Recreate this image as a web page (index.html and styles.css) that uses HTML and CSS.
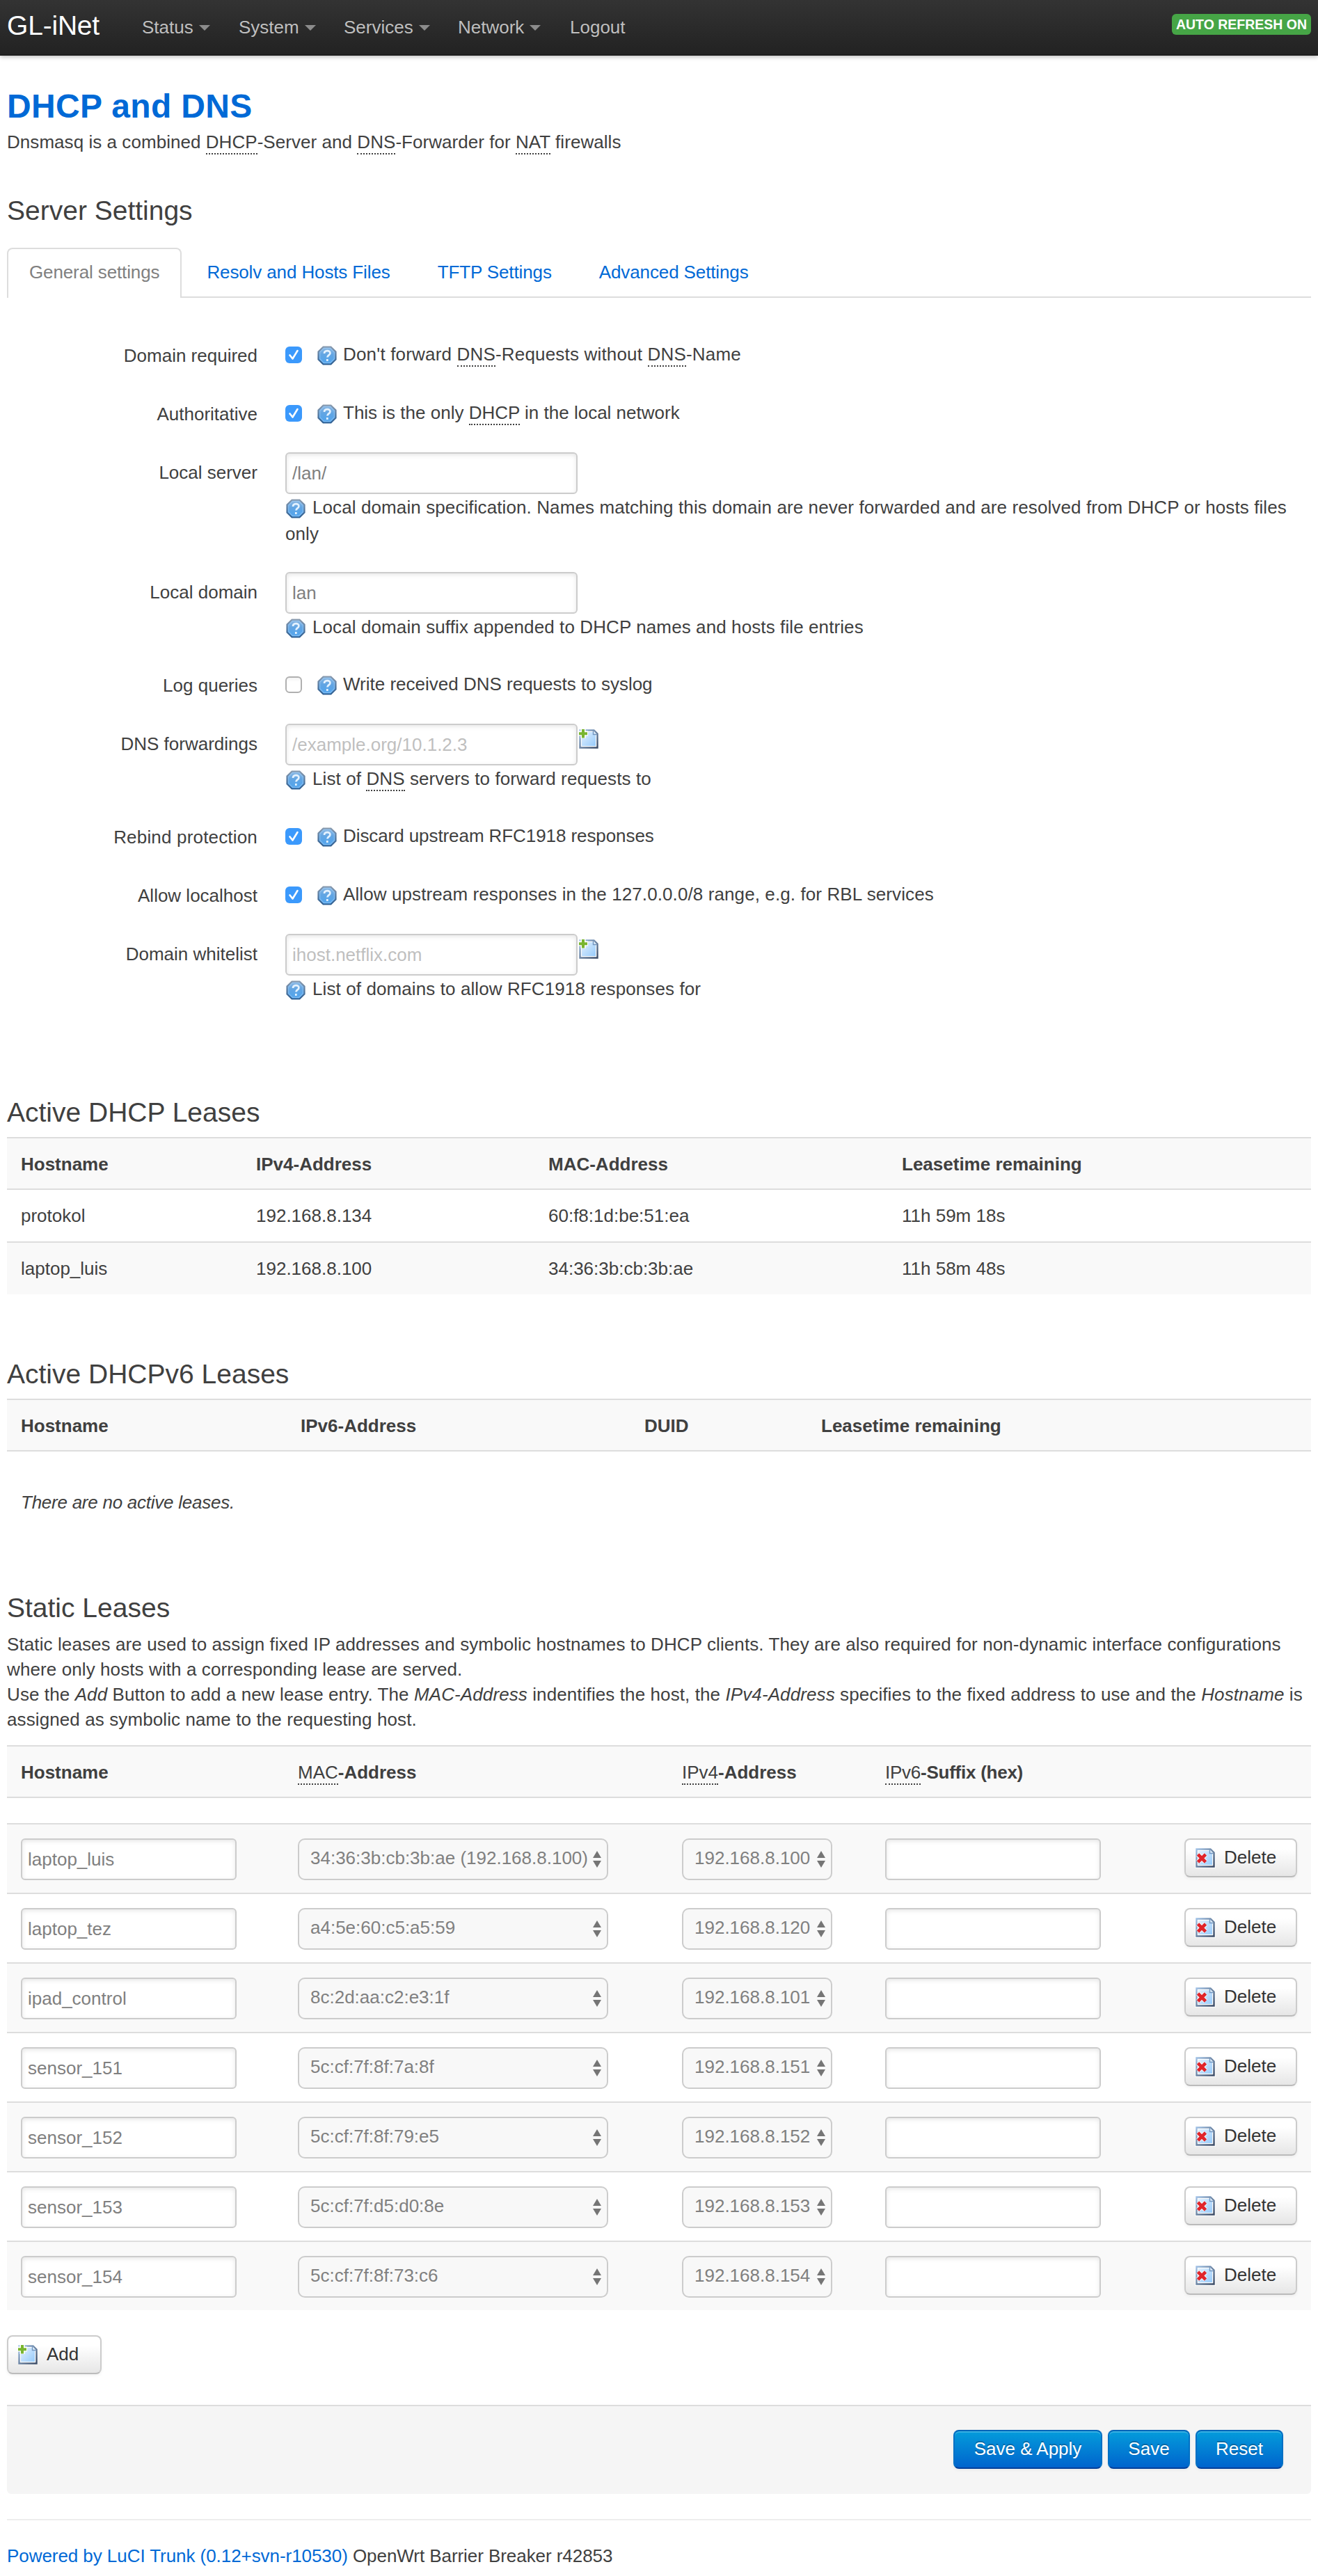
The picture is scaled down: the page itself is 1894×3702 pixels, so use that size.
FILE: index.html
```html
<!DOCTYPE html>
<html lang="en">
<head>
<meta charset="utf-8">
<title>GL-iNet - DHCP and DNS</title>
<link rel="stylesheet" href="styles.css">
</head>
<body>
<svg class="defs" width="0" height="0" aria-hidden="true">
  <defs>
    <linearGradient id="helpFill" x1="0" y1="0" x2="0" y2="1"><stop offset="0" stop-color="#8fb9e2"/><stop offset=".45" stop-color="#62a5e3"/><stop offset="1" stop-color="#4fa4ee"/></linearGradient>
    <linearGradient id="helpEdge" x1="0" y1="0" x2="0" y2="1"><stop offset="0" stop-color="#8799ae"/><stop offset="1" stop-color="#2f5f92"/></linearGradient>
    <linearGradient id="pageFill" x1="0" y1="0" x2="1" y2="1"><stop offset="0" stop-color="#e3f0fd"/><stop offset="1" stop-color="#97cbfb"/></linearGradient>
    <linearGradient id="pageEdge" x1="0" y1="0" x2="1" y2="1"><stop offset="0" stop-color="#9fc0e4"/><stop offset="1" stop-color="#3c4c66"/></linearGradient>
    <symbol id="help" viewBox="0 0 28 28">
      <path d="M8.500 1.500h11l7 7v11l-7 7h-11l-7-7v-11z" fill="url(#helpFill)" stroke="url(#helpEdge)" stroke-width="2.200"/>
      <path d="M9.300 3.700h9.400l5.600 5.600v9.400l-5.600 5.600H9.300l-5.600-5.600V9.300z" fill="none" stroke="#a9d3fa" stroke-opacity=".5" stroke-width="1.200"/>
      <path d="M10 11c0-5 8.400-5 8.400-.6 0 3-4 3-4 6.200M14.300 19v3" fill="none" stroke="#e4f2ff" stroke-width="2.700"/>
    </symbol>
    <symbol id="page" viewBox="0 0 32 32">
      <path d="M3.500 3.500H23.500L28.500 8.500V28.500H3.500Z" fill="#fff" stroke="url(#pageEdge)" stroke-width="2.400"/>
      <path d="M6 6H22L23.500 9.500H26V26H6Z" fill="url(#pageFill)"/>
      <path d="M22.500 4v5.500h5.500" fill="#dcecfb" stroke="#7396bf" stroke-width="1.400"/>
    </symbol>
    <symbol id="add" viewBox="0 0 32 32">
      <use href="#page"/>
      <path d="M8 1v14M1 8h14" stroke="#fff" stroke-width="7"/>
      <path d="M8 2v12.500M2 8.200h12" stroke="#79b530" stroke-width="4"/>
    </symbol>
    <symbol id="del" viewBox="0 0 32 32">
      <path d="M1 1H24L31 8V31H1Z" fill="#fff" fill-opacity=".7"/>
      <use href="#page"/>
      <path d="M5.500 11l11 11m0-11l-11 11" stroke="#fff" stroke-opacity=".7" stroke-width="7"/>
      <path d="M5.500 11l11 11m0-11l-11 11" stroke="#e0252b" stroke-width="4.600"/>
    </symbol>
  </defs>
</svg>
<header class="topbar">
  <a class="brand">GL-iNet</a>
  <nav class="menu">
    <a class="menu-item status">Status<i class="caret"></i></a>
    <a class="menu-item system">System<i class="caret"></i></a>
    <a class="menu-item services">Services<i class="caret"></i></a>
    <a class="menu-item network">Network<i class="caret"></i></a>
    <a class="menu-item">Logout</a>
  </nav>
  <span class="badge">AUTO REFRESH ON</span>
</header>
<main class="container">
  <h1 class="page-title">DHCP and DNS</h1>
  <p class="desc">Dnsmasq is a combined <abbr>DHCP</abbr>-Server and <abbr>DNS</abbr>-Forwarder for <abbr>NAT</abbr> firewalls</p>

  <h2 class="heading server-heading">Server Settings</h2>
  <nav class="tabs">
    <a class="tab active">General settings</a>
    <a class="tab">Resolv and Hosts Files</a>
    <a class="tab">TFTP Settings</a>
    <a class="tab">Advanced Settings</a>
  </nav>

  <form class="settings">
    <div class="row">
      <label class="label">Domain required</label>
      <div class="field check-line"><span class="check on"><svg viewBox="0 0 24 24"><path d="M6.500 12.500l4 5L17.500 6"/></svg></span><svg class="help"><use href="#help"/></svg><span class="loose">Don't forward <abbr>DNS</abbr>-Requests without <abbr>DNS</abbr>-Name</span></div>
    </div>
    <div class="row">
      <label class="label">Authoritative</label>
      <div class="field check-line"><span class="check on"><svg viewBox="0 0 24 24"><path d="M6.500 12.500l4 5L17.500 6"/></svg></span><svg class="help"><use href="#help"/></svg><span>This is the only <abbr>DHCP</abbr> in the local network</span></div>
    </div>
    <div class="row">
      <label class="label">Local server</label>
      <div class="field"><input class="text" type="text" value="/lan/"><p class="hint"><svg class="help"><use href="#help"/></svg>Local domain specification. Names matching this domain are never forwarded and are resolved from DHCP or hosts files<br>only</p></div>
    </div>
    <div class="row">
      <label class="label">Local domain</label>
      <div class="field"><input class="text" type="text" value="lan"><p class="hint"><svg class="help"><use href="#help"/></svg>Local domain suffix appended to DHCP names and hosts file entries</p></div>
    </div>
    <div class="row">
      <label class="label">Log queries</label>
      <div class="field check-line"><span class="check"></span><svg class="help"><use href="#help"/></svg><span>Write received DNS requests to syslog</span></div>
    </div>
    <div class="row">
      <label class="label">DNS forwardings</label>
      <div class="field"><div class="with-add"><input class="text" type="text" placeholder="/example.org/10.1.2.3"><svg class="page-icon"><use href="#add"/></svg></div><p class="hint"><svg class="help"><use href="#help"/></svg>List of <abbr>DNS</abbr> servers to forward requests to</p></div>
    </div>
    <div class="row">
      <label class="label loose">Rebind protection</label>
      <div class="field check-line"><span class="check on"><svg viewBox="0 0 24 24"><path d="M6.500 12.500l4 5L17.500 6"/></svg></span><svg class="help"><use href="#help"/></svg><span class="tight">Discard upstream RFC1918 responses</span></div>
    </div>
    <div class="row">
      <label class="label">Allow localhost</label>
      <div class="field check-line"><span class="check on"><svg viewBox="0 0 24 24"><path d="M6.500 12.500l4 5L17.500 6"/></svg></span><svg class="help"><use href="#help"/></svg><span class="prose">Allow upstream responses in the 127.0.0.0/8 range, e.g. for RBL services</span></div>
    </div>
    <div class="row">
      <label class="label">Domain whitelist</label>
      <div class="field"><div class="with-add"><input class="text" type="text" placeholder="ihost.netflix.com"><svg class="page-icon"><use href="#add"/></svg></div><p class="hint"><svg class="help"><use href="#help"/></svg>List of domains to allow RFC1918 responses for</p></div>
    </div>
  </form>

  <section class="leases">
    <h2 class="heading">Active DHCP Leases</h2>
    <table class="table leases4">
      <colgroup><col class="c1"><col class="c2"><col class="c3"><col></colgroup>
      <tr class="head"><th>Hostname</th><th>IPv4-Address</th><th>MAC-Address</th><th>Leasetime remaining</th></tr>
      <tr><td>protokol</td><td>192.168.8.134</td><td>60:f8:1d:be:51:ea</td><td>11h 59m 18s</td></tr>
      <tr><td>laptop_luis</td><td>192.168.8.100</td><td>34:36:3b:cb:3b:ae</td><td>11h 58m 48s</td></tr>
    </table>
  </section>

  <section class="leases-v6">
    <h2 class="heading">Active DHCPv6 Leases</h2>
    <table class="table leases6">
      <colgroup><col class="c1"><col class="c2"><col class="c3"><col></colgroup>
      <tr class="head"><th>Hostname</th><th>IPv6-Address</th><th>DUID</th><th>Leasetime remaining</th></tr>
      <tr class="empty"><td colspan="4"><em>There are no active leases.</em></td></tr>
    </table>
  </section>

  <section class="static">
    <h2 class="heading">Static Leases</h2>
    <p class="intro">Static leases are used to assign fixed IP addresses and symbolic hostnames to DHCP clients. They are also required for non-dynamic interface configurations<br>where only hosts with a corresponding lease are served.<br>Use the <em>Add</em> Button to add a new lease entry. The <em>MAC-Address</em> indentifies the host, the <em>IPv4-Address</em> specifies to the fixed address to use and the <em>Hostname</em> is<br>assigned as symbolic name to the requesting host.</p>
    <table class="table statics">
      <colgroup><col class="c1"><col class="c2"><col class="c3"><col class="c4"><col></colgroup>
      <tr class="head"><th>Hostname</th><th><abbr>MAC</abbr>-Address</th><th><abbr>IPv4</abbr>-Address</th><th class="suffix"><abbr>IPv6</abbr>-Suffix (hex)</th><th></th></tr>
      <tr class="spacer"><td colspan="5"></td></tr>
      <tr><td><input class="text" value="laptop_luis"></td><td><span class="select mac">34:36:3b:cb:3b:ae (192.168.8.100)<i class="arrows"></i></span></td><td><span class="select ip">192.168.8.100<i class="arrows"></i></span></td><td><input class="text"></td><td><a class="btn"><svg class="page-icon"><use href="#del"/></svg>Delete</a></td></tr>
      <tr><td><input class="text" value="laptop_tez"></td><td><span class="select mac">a4:5e:60:c5:a5:59<i class="arrows"></i></span></td><td><span class="select ip">192.168.8.120<i class="arrows"></i></span></td><td><input class="text"></td><td><a class="btn"><svg class="page-icon"><use href="#del"/></svg>Delete</a></td></tr>
      <tr><td><input class="text" value="ipad_control"></td><td><span class="select mac">8c:2d:aa:c2:e3:1f<i class="arrows"></i></span></td><td><span class="select ip">192.168.8.101<i class="arrows"></i></span></td><td><input class="text"></td><td><a class="btn"><svg class="page-icon"><use href="#del"/></svg>Delete</a></td></tr>
      <tr><td><input class="text" value="sensor_151"></td><td><span class="select mac">5c:cf:7f:8f:7a:8f<i class="arrows"></i></span></td><td><span class="select ip">192.168.8.151<i class="arrows"></i></span></td><td><input class="text"></td><td><a class="btn"><svg class="page-icon"><use href="#del"/></svg>Delete</a></td></tr>
      <tr><td><input class="text" value="sensor_152"></td><td><span class="select mac">5c:cf:7f:8f:79:e5<i class="arrows"></i></span></td><td><span class="select ip">192.168.8.152<i class="arrows"></i></span></td><td><input class="text"></td><td><a class="btn"><svg class="page-icon"><use href="#del"/></svg>Delete</a></td></tr>
      <tr><td><input class="text" value="sensor_153"></td><td><span class="select mac">5c:cf:7f:d5:d0:8e<i class="arrows"></i></span></td><td><span class="select ip">192.168.8.153<i class="arrows"></i></span></td><td><input class="text"></td><td><a class="btn"><svg class="page-icon"><use href="#del"/></svg>Delete</a></td></tr>
      <tr><td><input class="text" value="sensor_154"></td><td><span class="select mac">5c:cf:7f:8f:73:c6<i class="arrows"></i></span></td><td><span class="select ip">192.168.8.154<i class="arrows"></i></span></td><td><input class="text"></td><td><a class="btn"><svg class="page-icon"><use href="#del"/></svg>Delete</a></td></tr>
    </table>
    <a class="btn btn-add"><svg class="page-icon"><use href="#add"/></svg>Add</a>
  </section>

  <div class="actions">
    <a class="btn primary apply">Save &amp; Apply</a>
    <a class="btn primary save">Save</a>
    <a class="btn primary reset">Reset</a>
  </div>
  <footer class="footer"><a class="link">Powered by LuCI Trunk (0.12+svn-r10530)</a> OpenWrt Barrier Breaker r42853</footer>
</main>
</body>
</html>
```
FILE: styles.css
```css
* { box-sizing: border-box; }
body {
  margin: 0;
  background: #fff;
  color: #404040;
  font: 26px/36px "Liberation Sans", Arial, sans-serif;
  white-space: nowrap;
}
p, h1, h2 { margin: 0; }
a { text-decoration: none; }
.defs { display: block; }
abbr { border-bottom: 2px dotted #404040; padding-bottom: 1px; font-weight: 400; }
.loose { letter-spacing: .18px; }
.tight { letter-spacing: -.08px; }
.prose, .hint, .intro { letter-spacing: .1px; }

/* top navigation */
.topbar {
  display: flex;
  height: 80px;
  padding: 0 10px;
  background: linear-gradient(#333, #222);
  box-shadow: 0 2px 6px rgba(0, 0, 0, .25), inset 0 -2px 0 rgba(0, 0, 0, .1);
}
.brand { width: 194px; color: #fff; font-size: 39px; line-height: 73px; letter-spacing: -.2px; }
.menu { display: flex; flex: 1; color: #bfbfbf; line-height: 78px; text-shadow: 0 -1px 0 rgba(0, 0, 0, .25); }
.status { width: 139px; }
.system { width: 151px; }
.services { width: 164px; }
.network { width: 161px; }
.caret {
  display: inline-block;
  margin-left: 8px;
  vertical-align: 4px;
  border: 8px solid transparent;
  border-top-color: #8c8c8c;
  border-bottom: 0;
}
.badge {
  width: 200px;
  height: 30px;
  margin-top: 20px;
  border-radius: 6px;
  background: #46a546;
  color: #fff;
  font-size: 19.5px;
  font-weight: 700;
  line-height: 30px;
  text-align: center;
}

.container { width: 1874px; margin-left: 10px; }
.page-title { padding-top: 45px; color: #0069d6; font-size: 48px; line-height: 56px; letter-spacing: .35px; }
.desc { margin-top: 5px; letter-spacing: .05px; }
.heading { font-size: 39px; font-weight: 400; line-height: 46px; }
.server-heading { margin-top: 58px; }

/* tabs */
.tabs { display: flex; height: 72px; margin-top: 30px; border-bottom: 2px solid #ddd; letter-spacing: -.12px; }
.tab { height: 72px; padding: 15px 30px 0; margin-right: 4px; border: 2px solid transparent; border-bottom: 0; color: #0069d6; }
.tab.active { background: #fff; border-color: #ddd; border-radius: 8px 8px 0 0; color: #808080; }

/* settings form */
.settings { padding-top: 54px; }
.row { display: flex; gap: 40px; min-height: 48px; margin-bottom: 36px; }
.label { width: 360px; padding-top: 11px; text-align: right; }
.field { flex: 1; }
.check-line { display: flex; padding-top: 9px; }
.check {
  width: 24px;
  height: 24px;
  margin: 7px 22px 0 0;
  border: 2px solid #b0b0b0;
  border-radius: 6px;
  background: linear-gradient(#f4f4f4, #fff 30%);
}
.check.on { border: 0; background: #3b99fc; }
.check svg { display: block; width: 24px; height: 24px; fill: none; stroke: #fff; stroke-width: 2.6; stroke-linecap: round; stroke-linejoin: round; }
.help { width: 28px; height: 28px; margin: 6px 9px 0 0; }
.text {
  display: block;
  width: 420px;
  height: 60px;
  padding: 3px 8px;
  border: 2px solid #ccc;
  border-radius: 6px;
  background: #fff;
  box-shadow: inset 0 2px 6px rgba(0, 0, 0, .1);
  color: #808080;
  font: inherit;
}
.text::placeholder { color: #bfbfbf; opacity: 1; }
.with-add { display: flex; }
.page-icon { width: 32px; height: 32px; }
.with-add .page-icon { margin-top: 6px; }
.hint { line-height: 38px; }
.hint .help { margin: 0 10px 0 1px; vertical-align: -7px; }

/* tables */
.table { width: 100%; table-layout: fixed; border-spacing: 0; }
.table th, .table td { padding: 19px 0 19px 20px; border-top: 2px solid #ddd; text-align: left; vertical-align: top; }
.table th { padding-bottom: 17px; }
.table tr:nth-child(odd) > * { background: #f9f9f9; }
.leases { margin-top: 136px; }
.leases .heading, .leases-v6 .heading { margin-bottom: 12px; }
.leases-v6 { margin-top: 92px; }
.leases4 .c1 { width: 338px; }
.leases4 .c2 { width: 420px; }
.leases4 .c3 { width: 508px; }
.leases6 .c1 { width: 402px; }
.leases6 .c2 { width: 494px; }
.leases6 .c3 { width: 254px; }
.table .empty td { height: 130px; padding-top: 55px; border-top-color: #ddd; letter-spacing: -.25px; }
.static { margin-top: 74px; }
.intro { margin: 11px 0 19px; }
.statics .c1 { width: 398px; }
.statics .c2 { width: 552px; }
.statics .c3 { width: 292px; }
.statics .c4 { width: 430px; }
.statics .suffix { letter-spacing: -.25px; }
.table .spacer td { height: 38px; padding: 0; }
.statics td { height: 100px; padding: 20px 0 0 20px; }
.statics .text { width: 310px; }
.select {
  display: flex;
  align-items: center;
  justify-content: space-between;
  height: 60px;
  padding: 0 8px 4px 16px;
  border: 2px solid #ccc;
  border-radius: 10px;
  background: #f8f8f8;
  color: #808080;
}
.mac { width: 446px; }
.ip { width: 216px; }
.arrows { display: flex; flex-direction: column; gap: 4px; margin-top: 4px; }
.arrows::before, .arrows::after { content: ""; border: 6px solid transparent; }
.arrows::before { border-top: 0; border-bottom: 10px solid #757575; }
.arrows::after { border-bottom: 0; border-top: 10px solid #757575; }

/* buttons */
.btn {
  display: flex;
  width: 162px;
  height: 56px;
  padding: 7px 12px;
  border: 2px solid #ccc;
  border-bottom-color: #bbb;
  border-radius: 8px;
  background: linear-gradient(#fff, #fff 25%, #e6e6e6);
  box-shadow: 0 2px 4px rgba(0, 0, 0, .05);
  color: #333;
}
.btn .page-icon { margin: 3px 11px 0 0; }
.btn-add { width: 136px; margin-top: 36px; }
.actions {
  display: flex;
  justify-content: flex-end;
  gap: 8px;
  height: 128px;
  margin-top: 44px;
  padding: 34px 40px 0;
  border-top: 2px solid #ddd;
  border-radius: 0 0 6px 6px;
  background: #f5f5f5;
}
.primary {
  justify-content: center;
  padding: 7px 0 0;
  border-color: #0064b8 #0070c4 #003f9a;
  background: linear-gradient(#049cdb, #0064cd);
  box-shadow: inset 0 2px 0 rgba(255, 255, 255, .2), 0 2px 4px rgba(0, 0, 0, .05);
  color: #fff;
  text-shadow: 0 -2px 0 rgba(0, 0, 0, .25);
}
.apply { width: 214px; }
.save { width: 118px; }
.reset { width: 126px; }
.footer { margin-top: 36px; padding-top: 33px; border-top: 2px solid #eee; letter-spacing: -.06px; }
.link { color: #0069d6; }
```
